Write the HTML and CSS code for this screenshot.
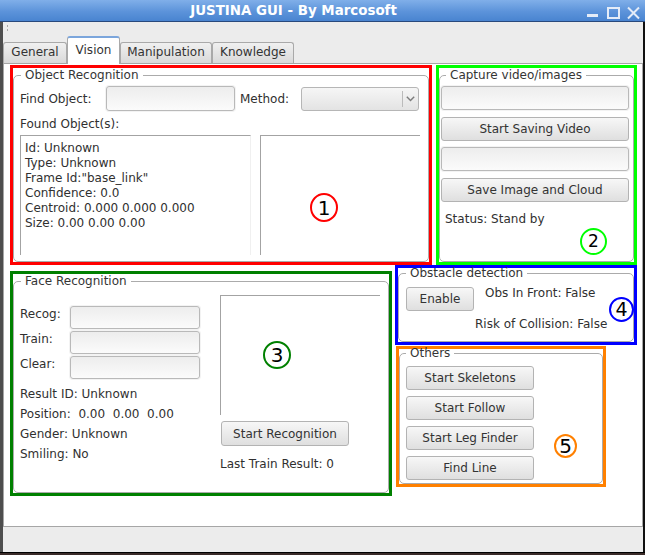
FILE: index.html
```html
<!DOCTYPE html>
<html>
<head>
<meta charset="utf-8">
<title>JUSTINA GUI - By Marcosoft</title>
<link rel="stylesheet" href="styles.css">
</head>
<body>
<div class="window">
  <div class="titlebar">
    <div class="title">JUSTINA GUI - By Marcosoft</div>
    <svg class="wm" width="58" height="21" viewBox="0 0 58 21">
      <rect x="0" y="14" width="11" height="3" fill="#e4ecf8"/>
      <rect x="21" y="8" width="11" height="10" fill="none" stroke="#e4ecf8" stroke-width="2"/>
      <path d="M41 7.5 L52 18.5 M52 7.5 L41 18.5" stroke="#e4ecf8" stroke-width="2" fill="none"/>
    </svg>
  </div>
  <div class="frame">
    <div class="toolbar"><span class="grip"></span></div>
    <div class="tabs">
      <div class="tab tab-general">General</div>
      <div class="tab tab-vision tab-active">Vision</div>
      <div class="tab tab-manip">Manipulation</div>
      <div class="tab tab-know">Knowledge</div>
    </div>
    <div class="pane">
      <div class="row-top">
        <div class="mark mark-red">
          <fieldset class="group group-obj">
            <legend>Object Recognition</legend>
            <div class="find-row">
              <span class="lbl-find">Find Object:</span>
              <span class="lineedit le-find"></span>
              <span class="lbl-method">Method:</span>
              <span class="combo"><span class="combo-arrow"><svg width="9" height="6" viewBox="0 0 9 6"><path d="M0.8 0.8 L4.5 4.6 L8.2 0.8" fill="none" stroke="#7c7c7c" stroke-width="1.4"/></svg></span></span>
            </div>
            <div class="found-lbl">Found Object(s):</div>
            <div class="found-row">
              <div class="textbox textbox-info">Id: Unknown<br>Type: Unknown<br>Frame Id:"base_link"<br>Confidence: 0.0<br>Centroid: 0.000 0.000 0.000<br>Size: 0.00 0.00 0.00</div>
              <div class="textbox textbox-view"></div>
            </div>
          </fieldset>
          <span class="badge badge-red">1</span>
        </div>
        <div class="mark mark-lime">
          <fieldset class="group group-cap">
            <legend>Capture video/images</legend>
            <span class="lineedit le-cap"></span>
            <span class="btn btn-cap">Start Saving Video</span>
            <span class="lineedit le-cap"></span>
            <span class="btn btn-cap">Save Image and Cloud</span>
            <div class="status">Status: Stand by</div>
          </fieldset>
          <span class="badge badge-lime">2</span>
        </div>
      </div>
      <div class="row-bottom">
        <div class="mark mark-green">
          <fieldset class="group group-face">
            <legend>Face Recognition</legend>
            <div class="face-cols">
              <div class="face-left">
                <div class="form-row"><span class="form-lbl">Recog:</span><span class="lineedit le-face"></span></div>
                <div class="form-row"><span class="form-lbl">Train:</span><span class="lineedit le-face"></span></div>
                <div class="form-row"><span class="form-lbl">Clear:</span><span class="lineedit le-face"></span></div>
                <div class="info">
                  <div>Result ID: Unknown</div>
                  <div class="pre">Position:  0.00  0.00  0.00</div>
                  <div>Gender: Unknown</div>
                  <div>Smiling: No</div>
                </div>
              </div>
              <div class="face-right">
                <div class="textbox face-view"></div>
                <span class="btn btn-recog">Start Recognition</span>
                <div class="last-train">Last Train Result: 0</div>
              </div>
            </div>
          </fieldset>
          <span class="badge badge-green">3</span>
        </div>
        <div class="side">
          <div class="mark mark-blue">
            <fieldset class="group group-obs">
              <legend>Obstacle detection</legend>
              <div class="obs-row">
                <span class="btn btn-enable">Enable</span>
                <span class="obs-front">Obs In Front: False</span>
              </div>
              <div class="obs-risk">Risk of Collision: False</div>
            </fieldset>
            <span class="badge badge-blue">4</span>
          </div>
          <div class="mark mark-orange">
            <fieldset class="group group-oth">
              <legend>Others</legend>
              <span class="btn btn-oth">Start Skeletons</span>
              <span class="btn btn-oth">Start Follow</span>
              <span class="btn btn-oth">Start Leg Finder</span>
              <span class="btn btn-oth">Find Line</span>
            </fieldset>
            <span class="badge badge-orange">5</span>
          </div>
        </div>
      </div>
    </div>
    <div class="statusbar"></div>
  </div>
</div>
</body>
</html>
```
FILE: styles.css
```css
* { box-sizing: border-box; }
html, body { margin: 0; padding: 0; }
body {
  width: 645px;
  height: 555px;
  overflow: hidden;
  background: #3a2b28;
  font-family: "DejaVu Sans", "Noto Sans", sans-serif;
  font-size: 12px;
  color: #303030;
}
.window {
  width: 645px;
  height: 553px;
  display: flex;
  flex-direction: column;
  border-bottom: 1px solid #000;
}
.titlebar {
  height: 22px;
  flex: none;
  display: flex;
  align-items: center;
  background: linear-gradient(#80afe9, #5c93da 55%, #4984d0);
  border-bottom: 1px solid #29497c;
}
.title {
  flex: 1;
  text-align: center;
  color: #fff;
  font-weight: bold;
  font-size: 13.4px;
  line-height: 21px;
}
.wm { display: block; flex: none; }
.frame {
  flex: 1;
  display: flex;
  flex-direction: column;
  background: #ececec;
  border-left: 3px solid #4e4e4e;
  border-right: 2px solid #101010;
}
.toolbar { height: 15px; flex: none; }
.grip {
  display: block;
  width: 1px;
  height: 2px;
  margin: 3px 0 0 4px;
  background: #a8a8a8;
  box-shadow: 0 4px 0 #a8a8a8;
}
.tabs {
  height: 26px;
  flex: none;
  display: flex;
  align-items: flex-end;
  position: relative;
  z-index: 1;
}
.tab {
  height: 21px;
  display: flex;
  align-items: center;
  justify-content: center;
  border: 1px solid #a9a9a9;
  border-bottom: none;
  border-radius: 3px 3px 0 0;
  background: linear-gradient(#f0f0f0, #d9d9d9);
  color: #333;
  padding-bottom: 2px;
}
.tab-general { width: 64px; }
.tab-vision { width: 53px; }
.tab-manip { width: 92px; }
.tab-know { width: 82px; }
.tab-active {
  height: 28px;
  margin-bottom: -1px;
  padding-bottom: 2px;
  background: #fff;
  border-top: 2px solid #7ca6dc;
}
.pane {
  height: 464px;
  flex: none;
  background: #fff;
  border: 1px solid #a6a6a6;
  padding: 1px 0 0 6px;
}
.statusbar { flex: 1; }

.row-top { display: flex; gap: 4px; }
.row-bottom { display: flex; gap: 3px; }
.side { display: flex; flex-direction: column; }

.mark {
  position: relative;
  display: flex;
  flex-direction: column;
  border: 3px solid;
  flex: none;
}
.mark-red { width: 422px; height: 200px; border-color: #ff0000; }
.mark-lime { width: 201px; height: 200px; border-color: #00ff00; }
.mark-green { width: 382px; height: 225px; margin-top: 6px; border-color: #008000; }
.mark-blue { width: 242px; height: 80px; border-color: #0000ff; }
.mark-orange { width: 210px; height: 141px; margin: 1px 0 0 1px; border-color: #ff8000; }

.group {
  flex: 1;
  margin: 0;
  min-width: 0;
  border: 1px solid #ababab;
  border-radius: 5px;
}
.group legend {
  padding: 0 4px;
  line-height: 14px;
  color: #353535;
}
.group-obj { padding: 4px 6px 6px; }
.group-obj legend { margin-left: 1px; }
.group-cap { padding: 4px 4px 0 1px; display: flex; flex-direction: column; align-items: flex-start; }
.group-cap legend { margin-left: 5px; }
.group-obs { margin-top: -2px; padding: 7px 6px 0 7px; }
.group-oth { margin-top: -3px; padding: 6px 6px 0 6px; display: flex; flex-direction: column; align-items: flex-start; gap: 6px; }
.group-face { padding: 0 6px; }
.group-face legend { margin-left: 1px; }

.lineedit {
  display: block;
  border: 1px solid #b9b9b9;
  border-radius: 3px;
  background: linear-gradient(#ededed, #fbfbfb);
  box-shadow: 0 0 0 1px #f3f3f3;
}
.btn {
  display: flex;
  align-items: center;
  justify-content: center;
  border: 1px solid #b3b3b3;
  border-radius: 3px;
  background: linear-gradient(#f7f7f7, #dfdfdf);
  color: #333;
  white-space: nowrap;
}

.find-row { display: flex; align-items: center; height: 25px; }
.lbl-find { width: 86px; }
.le-find { width: 129px; height: 25px; }
.lbl-method { width: 61px; margin-left: 5px; }
.combo {
  width: 118px;
  height: 24px;
  display: flex;
  justify-content: flex-end;
  border: 1px solid #b6b6b6;
  border-radius: 3px;
  background: linear-gradient(#f6f6f6, #e3e3e3);
}
.combo-arrow {
  width: 16px;
  margin: 3px 0;
  border-left: 1px solid #bbbbbb;
  display: flex;
  align-items: center;
  justify-content: center;
}
.combo-arrow svg { display: block; }
.found-lbl { margin-top: 6px; line-height: 14px; }
.found-row { display: flex; gap: 9px; margin-top: 4px; }
.textbox {
  height: 120px;
  border-top: 1px solid #a3a3a3;
  border-left: 1px solid #a3a3a3;
  border-right: 1px solid #f0f0f0;
  background: #fff;
}
.textbox-info { width: 231px; padding: 5px 4px; line-height: 15px; }
.textbox-view { width: 160px; border-right: none; }

.le-cap { width: 188px; height: 24px; }
.btn-cap { width: 188px; height: 24px; margin-top: 7px; }
.le-cap + .btn-cap + .le-cap { margin-top: 6px; }
.status { margin: 10px 0 0 4px; line-height: 14px; }

.obs-row { display: flex; align-items: flex-start; }
.btn-enable { width: 68px; height: 24px; }
.obs-front { margin: -1px 0 0 11px; line-height: 14px; }
.obs-risk { margin: 6px 0 0 69px; line-height: 14px; }

.btn-oth { width: 128px; height: 24px; }

.face-cols { display: flex; gap: 20px; }
.face-left { width: 180px; padding-top: 18px; }
.form-row { display: flex; align-items: flex-start; margin-bottom: 2px; }
.form-lbl { width: 50px; line-height: 14px; margin-top: 1px; }
.le-face { width: 130px; height: 23px; }
.info { margin-top: 5px; line-height: 20px; }
.pre { white-space: pre; }
.face-right { width: 160px; padding-top: 7px; }
.face-view { width: 160px; height: 120px; border-right: none; }
.btn-recog { width: 128px; height: 25px; margin: 6px 0 0 1px; }
.last-train { margin-top: 11px; line-height: 14px; }

.badge {
  position: absolute;
  border: 2px solid;
  border-radius: 50%;
  display: flex;
  align-items: center;
  justify-content: center;
  color: #000;
  font-size: 19px;
  line-height: 1;
}
.badge-red { left: 297px; top: 125px; width: 28px; height: 29px; border-color: #ff0000; font-size: 20px; }
.badge-lime { left: 141px; top: 160px; width: 27px; height: 27px; border-color: #00ff00; font-size: 17px; }
.badge-green { left: 250px; top: 67px; width: 28px; height: 28px; border-color: #008000; font-size: 20px; }
.badge-blue { left: 211px; top: 29px; width: 25px; height: 25px; border-color: #0000ff; font-size: 19px; }
.badge-orange { left: 155px; top: 85px; width: 23px; height: 24px; border-color: #ff8000; font-size: 20px; }
```
